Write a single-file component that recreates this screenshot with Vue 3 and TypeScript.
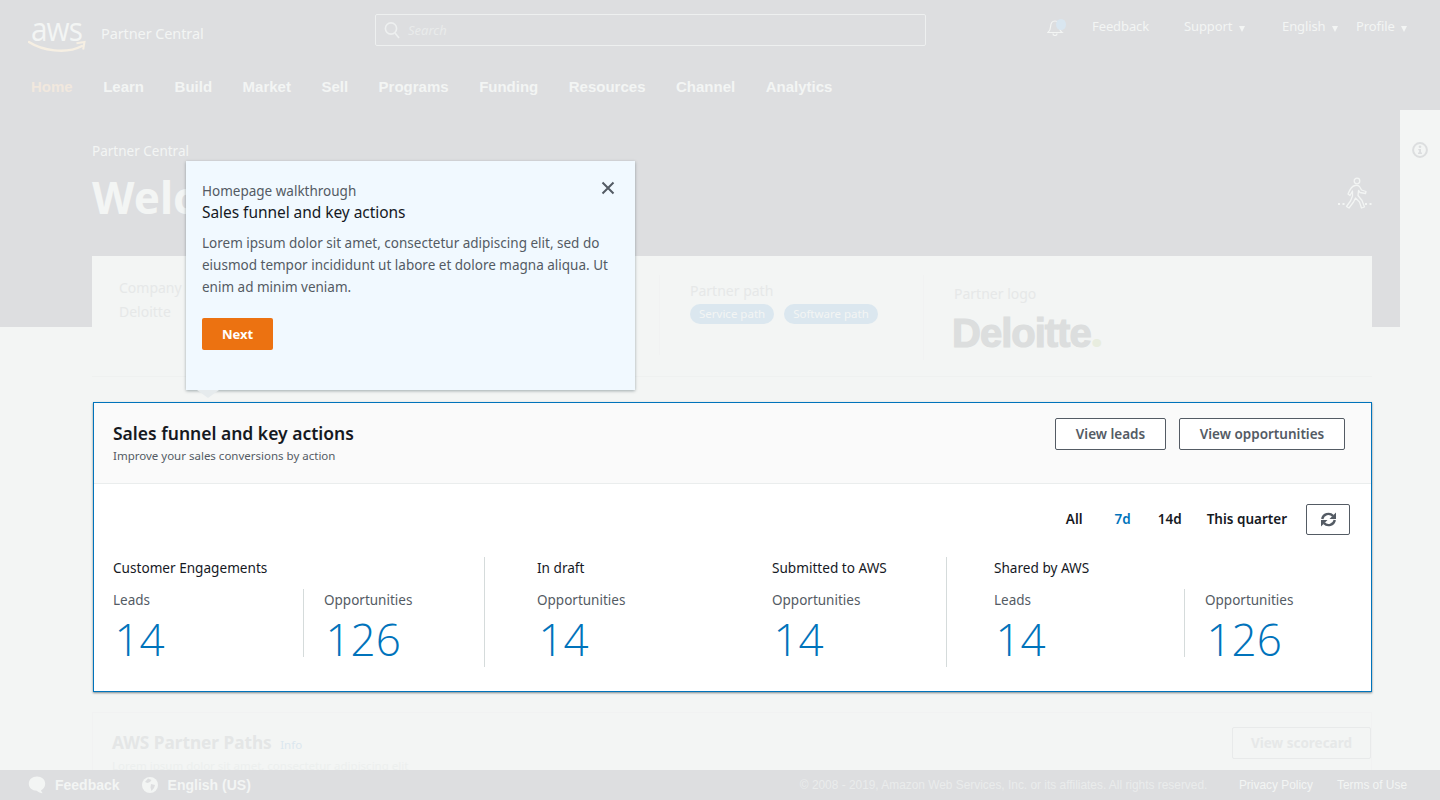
<script setup lang="ts">
const navItems: string[] = ['Learn', 'Build', 'Market', 'Sell', 'Programs', 'Funding', 'Resources', 'Channel', 'Analytics']
const ranges: string[] = ['All', '7d', '14d', 'This quarter']
</script>

<template>
  <div class="app">
    <header class="top">
      <div class="brand">
        <div class="logo">
          <span class="logo-text">aws</span>
          <svg class="smile" width="58" height="14" viewBox="0 0 58 14" fill="none">
            <path d="M1 2C14 10.500 38 14.500 54 6" stroke="#f6efe3" stroke-width="2.400" stroke-linecap="round" />
            <path d="M48.500 3.200L56.500 2L55.200 9.500" stroke="#f6efe3" stroke-width="2" fill="none" />
          </svg>
        </div>
        <span class="brand-name">Partner Central</span>
      </div>
      <div class="search">
        <svg width="16" height="18" viewBox="0 0 16 18" fill="none" stroke="#eef0f0" stroke-width="1.600">
          <circle cx="7" cy="7.500" r="5.600" />
          <path d="M11 12l4 5" />
        </svg>
        <span class="search-text">Search</span>
      </div>
      <div class="util">
        <span class="bell">
          <svg width="18" height="18" viewBox="0 0 18 18" fill="none" stroke="#f3f5f4" stroke-width="1.200">
            <path d="M1 14.500c2-1.500 2.400-3 2.600-6C3.800 5 5.500 3 8 3s4.200 2 4.400 5.500c.2 3 .6 4.500 2.600 6z" />
            <path d="M6 15.500a2 2 0 0 0 4 0" />
          </svg>
          <i class="bell-dot"></i>
        </span>
        <span class="u-feedback">Feedback</span>
        <span class="u-support">Support<i class="caret"></i></span>
        <span class="u-english">English<i class="caret"></i></span>
        <span class="u-profile">Profile<i class="caret"></i></span>
      </div>
    </header>

    <nav class="nav">
      <span class="nav-home">Home</span>
      <span v-for="item in navItems" :key="item">{{ item }}</span>
    </nav>

    <div class="layout">
      <main class="main">
        <div class="crumb">Partner Central</div>
        <div class="hero">
          <h1>Welcome</h1>
          <svg class="walker" width="36" height="32" viewBox="-1 0 36 32" fill="none" stroke="#f3f5f4" stroke-width="1.300" stroke-linejoin="round">
            <circle cx="20" cy="4" r="2.800" />
            <path d="M18 8.500C15 9 13 12 11 17L13 18.500L15.500 14L15.500 19L13.500 24L9.500 29.500L12 31L16.500 25L18.500 21L22.500 25L24.500 31L27.500 30L25 23.500L21 18.500L21.500 13.500L23 15.500L28.500 16.500L29 14.500L24.500 13L22.500 9.500C21.500 8.500 20 8.200 18 8.500Z" />
            <path d="M1 27h7M28 27h7" stroke-dasharray="2 2.500" stroke-width="1.800" />
          </svg>
        </div>

        <section class="info-card">
          <div class="ic-company">
            <div class="dim-label">Company name</div>
            <div class="dim-value">Deloitte</div>
          </div>
          <div class="ic-path">
            <div class="dim-label">Partner path</div>
            <div class="chips">
              <span class="chip">Service path</span>
              <span class="chip">Software path</span>
            </div>
          </div>
          <div class="ic-logo">
            <div class="dim-label">Partner logo</div>
            <div class="deloitte">Deloitte<span>.</span></div>
          </div>
        </section>

        <section class="funnel">
          <div class="funnel-head">
            <div>
              <h2>Sales funnel and key actions</h2>
              <p>Improve your sales conversions by action</p>
            </div>
            <div class="head-actions">
              <button class="btn btn-leads">View leads</button>
              <button class="btn btn-opps">View opportunities</button>
            </div>
          </div>
          <div class="funnel-body">
            <div class="ranges">
              <span v-for="r in ranges" :key="r" class="range" :class="{ active: r === '7d' }">{{ r }}</span>
              <button class="refresh" aria-label="Refresh">
                <svg width="17" height="15" viewBox="0 0 17 15" fill="#545b64" stroke="none">
                  <path d="M2.200 7A6.400 6.400 0 0 1 13 3.800" fill="none" stroke="#545b64" stroke-width="2.400" />
                  <path d="M16 .5V7H9.500z" />
                  <path d="M14.800 8A6.400 6.400 0 0 1 4 11.200" fill="none" stroke="#545b64" stroke-width="2.400" />
                  <path d="M1 14.500V8H7.500z" />
                </svg>
              </button>
            </div>
            <div class="stats">
              <div class="group g1">
                <div class="g-title">Customer Engagements</div>
                <div class="pair">
                  <div class="metric m-left">
                    <div class="m-label">Leads</div>
                    <div class="m-num">14</div>
                  </div>
                  <div class="metric m-right">
                    <div class="m-label">Opportunities</div>
                    <div class="m-num">126</div>
                  </div>
                </div>
              </div>
              <div class="group g2">
                <div class="col-draft">
                  <div class="g-title">In draft</div>
                  <div class="m-label">Opportunities</div>
                  <div class="m-num">14</div>
                </div>
                <div class="col-sub">
                  <div class="g-title">Submitted to AWS</div>
                  <div class="m-label">Opportunities</div>
                  <div class="m-num">14</div>
                </div>
              </div>
              <div class="group g3">
                <div class="g-title">Shared by AWS</div>
                <div class="pair">
                  <div class="metric m-left">
                    <div class="m-label">Leads</div>
                    <div class="m-num">14</div>
                  </div>
                  <div class="metric m-right">
                    <div class="m-label">Opportunities</div>
                    <div class="m-num">126</div>
                  </div>
                </div>
              </div>
            </div>
          </div>
        </section>

        <section class="paths">
          <div>
            <div class="paths-title">AWS Partner Paths <span>Info</span></div>
            <div class="paths-sub">Lorem ipsum dolor sit amet, consectetur adipiscing elit</div>
          </div>
          <span class="paths-btn">View scorecard</span>
        </section>
      </main>
      <aside class="rail">
        <svg width="16" height="16" viewBox="0 0 16 16" fill="none">
          <circle cx="8" cy="8" r="6.900" stroke="#dcdedf" stroke-width="2" />
          <circle cx="8" cy="4.800" r="1.300" fill="#dcdedf" />
          <path d="M6.300 7h2.700v3.500h1v1.400H6v-1.400h1.100V8.300h-.8z" fill="#dcdedf" />
        </svg>
      </aside>
    </div>

    <div class="popover">
      <button class="close" aria-label="Close">
        <svg width="14" height="14" viewBox="0 0 14 14" stroke="#545b64" stroke-width="2" fill="none">
          <path d="M1.500 1.500l11 11M12.500 1.500l-11 11" />
        </svg>
      </button>
      <div class="pop-over">Homepage walkthrough</div>
      <div class="pop-title">Sales funnel and key actions</div>
      <p class="pop-text">Lorem ipsum dolor sit amet, consectetur adipiscing elit, sed do eiusmod tempor incididunt ut labore et dolore magna aliqua. Ut enim ad minim veniam.</p>
      <button class="next">Next</button>
      <i class="arrow"></i>
    </div>

    <footer class="foot">
      <div class="foot-left">
        <svg width="18" height="18" viewBox="0 0 18 18" fill="#f3f5f4">
          <path d="M9 0.500c4.700 0 8.200 3 8.200 7.200 0 3.100-1.900 5.500-4.200 6.600.2 1.100.8 2 1.600 3-2.100-.2-4.200-1.200-5.800-2.600C4.200 14.600.8 11.800.8 7.700.8 3.500 4.300.5 9 .5z" />
        </svg>
        <span class="f-feedback">Feedback</span>
        <svg class="globe" width="16" height="16" viewBox="0 0 16 16">
          <circle cx="8" cy="8" r="8" fill="#f3f5f4" />
          <path d="M6 1.500L9.500 3 8 5 5.500 6 3 5zM9 7l4 1-1 3-2.500 3L8.500 10.500z" fill="#dddee0" />
        </svg>
        <span>English (US)</span>
      </div>
      <div class="foot-right">
        <span class="copy">© 2008 - 2019, Amazon Web Services, Inc. or its affiliates. All rights reserved.</span>
        <span>Privacy Policy</span>
        <span>Terms of Use</span>
      </div>
    </footer>
  </div>
</template>

<style>
html, body { margin: 0; background: #f3f5f4; }
</style>

<style scoped>
.app {
  position: relative;
  width: 1440px;
  height: 800px;
  overflow: hidden;
  background: #dddee0;
  font-family: "Noto Sans", "Open Sans", sans-serif;
  color: #f3f5f4;
}
.top {
  height: 66px;
  display: flex;
  align-items: flex-start;
  padding-left: 30px;
  box-sizing: border-box;
}
.brand { display: flex; width: 345px; flex: none; }
.logo { width: 71px; height: 56px; position: relative; }
.logo-text {
  position: absolute;
  left: 1px;
  top: 10px;
  font-family: "Open Sans", sans-serif;
  font-size: 33px;
  line-height: 37px;
  letter-spacing: -1px;
  transform: scaleX(0.9);
  transform-origin: left center;
  color: #f3f5f4;
}
.smile { position: absolute; left: -2px; top: 40px; }
.brand-name { margin-top: 24px; font-size: 14.500px; line-height: 19px; letter-spacing: -0.1px; }
.search {
  width: 551px;
  height: 32px;
  margin-top: 14px;
  border: 1px solid #eef0f0;
  border-radius: 2px;
  box-sizing: border-box;
  display: flex;
  align-items: center;
  gap: 8px;
  padding-left: 8px;
  flex: none;
}
.search-text { font-size: 13px; font-style: italic; color: #e9ebeb; }
.util { flex: 1; position: relative; height: 66px; font-size: 13px; }
.util > span { position: absolute; top: 17px; line-height: 18px; white-space: nowrap; letter-spacing: -0.1px; }
.bell { left: 121px; top: 18px !important; width: 20px; height: 18px; }
.bell-dot { position: absolute; left: 9px; top: 1px; width: 10px; height: 11px; border-radius: 50%; background: #d9e6f0; }
.u-feedback { left: 166px; }
.u-support { left: 258px; }
.u-english { left: 356px; }
.u-profile { left: 430px; }
.caret {
  display: inline-block;
  width: 0;
  height: 0;
  margin-left: 6.500px;
  border-left: 3px solid transparent;
  border-right: 3px solid transparent;
  border-top: 6px solid #f3f5f4;
  vertical-align: -1px;
}
.nav {
  height: 44px;
  display: flex;
  gap: 30.500px;
  padding-left: 31px;
  font-family: "Liberation Sans", Arial, sans-serif;
  font-weight: 700;
  font-size: 15px;
  line-height: 42px;
  box-sizing: border-box;
}
.nav-home { color: #f1e8de; }
.layout { display: flex; height: 690px; }
.main {
  width: 1400px;
  flex: none;
  box-sizing: border-box;
  padding: 32px 28px 0 92px;
  background: linear-gradient(#dddee0 217px, #f3f5f4 217px);
}
.rail { flex: 1; background: #f3f5f4; padding: 32px 0 0 12px; box-sizing: border-box; }
.rail svg { display: block; }
.crumb { font-size: 13.500px; line-height: 18px; }
.hero { display: flex; justify-content: space-between; align-items: flex-start; height: 96px; }
.hero h1 { margin: 7px 0 0; font-size: 44px; line-height: 60px; font-weight: 700; }
.walker { margin-top: 17px; }
.info-card {
  height: 121px;
  background: #f3f5f4;
  border-bottom: 1px solid #eff1f0;
  box-sizing: border-box;
  display: flex;
  color: #e6e8e8;
}
.dim-label { font-size: 14px; line-height: 18px; }
.dim-value { font-size: 14px; line-height: 18px; margin-top: 6px; }
.ic-company { width: 568px; padding: 4px 0 0 27px; box-sizing: border-box; border-right: 1px solid #f1f2f2; height: 80px; margin-top: 19px; }
.ic-path { width: 264px; padding: 7px 0 0 30px; box-sizing: border-box; height: 85px; margin-top: 19px; border-right: 1px solid #f1f2f2; }
.chips { display: flex; gap: 10px; margin-top: 4px; }
.chip {
  height: 20px;
  padding: 0 9px;
  border-radius: 10px;
  background: #dbe7ef;
  color: #f3f5f4;
  font-size: 11.500px;
  line-height: 20px;
}
.ic-logo { padding: 29px 0 0 30px; }
.deloitte {
  margin: 8px 0 0 -2px;
  font-family: "Liberation Sans", Arial, sans-serif;
  font-weight: 700;
  font-size: 40px;
  line-height: 40px;
  letter-spacing: -1px;
  color: #dcdede;
  -webkit-text-stroke: 1.200px #dcdede;
}
.deloitte span {
  font-family: "Open Sans", sans-serif;
  font-weight: 800;
  font-size: 42px;
  color: #e8eddf;
  -webkit-text-stroke: 0;
}
.funnel {
  margin: 25px 0 0 1px;
  height: 290px;
  width: 1279px;
  box-sizing: border-box;
  background: #fff;
  border: 1px solid #0073bb;
  box-shadow: 0 1px 2px rgba(0, 28, 36, 0.5);
}
.funnel-head {
  height: 81px;
  box-sizing: border-box;
  background: #fafafa;
  border-bottom: 1px solid #eaeded;
  display: flex;
  justify-content: space-between;
  padding: 19px 26px 0 19px;
}
.funnel-head h2 { margin: 0; font-size: 17.500px; line-height: 22px; font-weight: 600; color: #16191f; }
.funnel-head p { margin: 3px 0 0; font-size: 11.500px; line-height: 18px; color: #545b64; }
.head-actions { display: flex; gap: 13px; margin-top: -4px; align-items: flex-start; }
.btn {
  height: 32px;
  padding: 0;
  border: 1px solid #545b64;
  border-radius: 2px;
  background: #fff;
  font: 600 13.500px/30px "Noto Sans", sans-serif;
  color: #545b64;
}
.btn-leads { width: 111px; }
.btn-opps { width: 166px; }
.funnel-body { padding: 20px 21px 0 19px; }
.ranges { display: flex; justify-content: flex-end; align-items: center; height: 31px; font-size: 13.500px; font-weight: 600; color: #16191f; }
.range { line-height: 30px; margin-top: -2px; }
.range:nth-child(1) { margin-right: 32px; }
.range:nth-child(2) { margin-right: 27px; }
.range:nth-child(3) { margin-right: 25px; }
.range:nth-child(4) { margin-right: 19px; }
.range.active { color: #0073bb; }
.refresh {
  width: 44px;
  height: 31px;
  padding: 0;
  border: 1px solid #545b64;
  border-radius: 2px;
  background: #fff;
  display: flex;
  align-items: center;
  justify-content: center;
}
.stats { display: flex; margin-top: 22px; height: 110px; }
.group { box-sizing: border-box; height: 110px; }
.g1 { width: 372px; border-right: 1px solid #d5dbdb; }
.g2 { width: 462px; padding-left: 52px; border-right: 1px solid #d5dbdb; display: flex; }
.g3 { padding-left: 47px; width: 380px; }
.col-draft { width: 235px; }
.g-title { font-size: 13.600px; line-height: 22px; color: #16191f; }
.pair { display: flex; margin-top: 10px; }
.m-label { font-size: 13.500px; line-height: 22px; color: #545b64; }
.g2 .m-label { margin-top: 10px; }
.metric { height: 68px; }
.m-left { width: 190px; border-right: 1px solid #d5dbdb; }
.m-right { padding-left: 20px; }
.m-num {
  font-family: "Open Sans", sans-serif;
  font-weight: 300;
  font-size: 44px;
  line-height: 56px;
  margin-left: 1.500px;
  color: #0073bb;
}
.paths {
  margin-top: 20px;
  width: 1280px;
  height: 100px;
  display: flex;
  justify-content: space-between;
  padding: 17px 0 0 19px;
  box-sizing: border-box;
  border: 1px solid #f1f2f2;
  border-width: 1px 1px 0;
}
.paths-title { font-size: 17.200px; font-weight: 700; line-height: 26px; color: #e4e6e6; }
.paths-title span { margin-left: 4px; font-size: 11.500px; font-weight: 400; color: #dbe7ef; }
.paths-sub { font-size: 11.500px; line-height: 16px; color: #ecefee; }
.paths-btn {
  width: 139px;
  height: 32px;
  margin-top: -3px;
  box-sizing: border-box;
  border: 1px solid #e8eaea;
  border-radius: 2px;
  text-align: center;
  font-size: 13.500px;
  font-weight: 700;
  line-height: 30px;
  color: #e6e8e8;
}
.popover {
  position: absolute;
  left: 186px;
  top: 161px;
  width: 449px;
  height: 229px;
  box-sizing: border-box;
  padding: 20px 16px 0;
  background: #f1f9ff;
  box-shadow: 0 1px 3px rgba(0, 28, 36, 0.35);
}
.close { position: absolute; right: 20px; top: 20px; padding: 0; border: 0; background: none; width: 14px; height: 14px; }
.pop-over { font-size: 13.500px; line-height: 20px; color: #545b64; }
.pop-title { font-size: 15.500px; line-height: 22px; letter-spacing: -0.05px; color: #16191f; }
.pop-text { margin: 9px 0 0; font-size: 13.500px; line-height: 22px; color: #545b64; }
.next {
  display: block;
  margin-top: 20px;
  width: 71px;
  height: 32px;
  padding: 0;
  border: 0;
  border-radius: 2px;
  background: #ec7211;
  color: #fff;
  font: 700 13px/32px "Noto Sans", sans-serif;
}
.arrow {
  position: absolute;
  left: 11px;
  bottom: -8px;
  width: 0;
  height: 0;
  border-left: 11px solid transparent;
  border-right: 11px solid transparent;
  border-top: 8px solid #e6ebed;
}
.foot {
  position: absolute;
  left: 0;
  right: 0;
  bottom: 0;
  height: 30px;
  background: #dddee0;
  display: flex;
  justify-content: space-between;
  align-items: center;
  padding: 0 33px 0 28px;
  font-family: "Liberation Sans", Arial, sans-serif;
}
.foot-left { display: flex; align-items: center; font-size: 14px; font-weight: 700; }
.f-feedback { margin-left: 9px; }
.globe { margin: 0 10px 0 22px; }
.foot-right { display: flex; gap: 24px; font-size: 11.900px; }
.copy { color: #eaecec; margin-right: 7.600px; }
</style>
